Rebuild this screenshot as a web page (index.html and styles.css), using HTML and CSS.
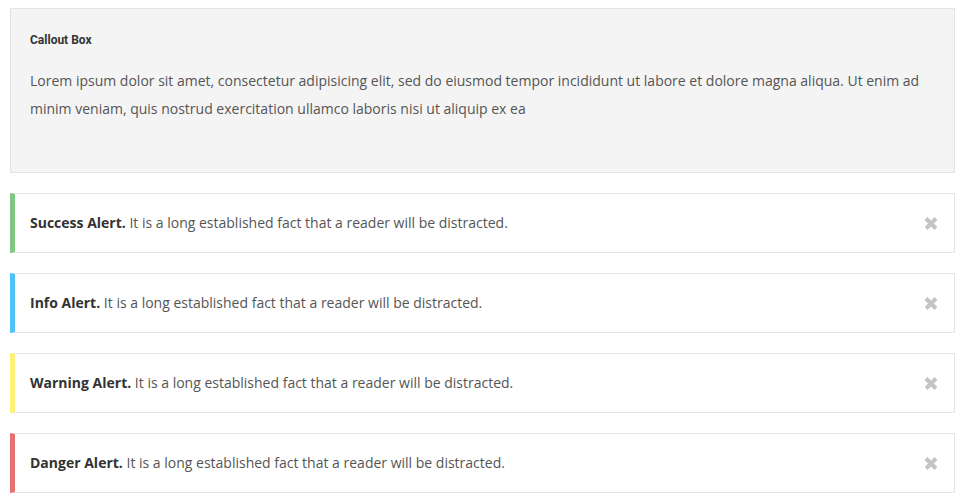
FILE: index.html
```html
<!DOCTYPE html>
<html>
<head>
<meta charset="utf-8">
<link rel="stylesheet" href="styles.css">
</head>
<body>
<div class="page">
  <div class="callout">
    <h4 class="callout-title">Callout Box</h4>
    <p class="callout-text">Lorem ipsum dolor sit amet, consectetur adipisicing elit, sed do eiusmod tempor incididunt ut labore et dolore magna aliqua. Ut enim ad minim veniam, quis nostrud exercitation ullamco laboris nisi ut aliquip ex ea</p>
  </div>
  <div class="alert alert-success"><span class="alert-text"><strong>Success Alert.</strong> It is a long established fact that a reader will be distracted.</span><svg class="close" viewBox="0 0 14 13" width="14" height="13"><path d="M2 1.5 L12 11.5 M12 1.5 L2 11.5"/></svg></div>
  <div class="alert alert-info"><span class="alert-text"><strong>Info Alert.</strong> It is a long established fact that a reader will be distracted.</span><svg class="close" viewBox="0 0 14 13" width="14" height="13"><path d="M2 1.5 L12 11.5 M12 1.5 L2 11.5"/></svg></div>
  <div class="alert alert-warning"><span class="alert-text"><strong>Warning Alert.</strong> It is a long established fact that a reader will be distracted.</span><svg class="close" viewBox="0 0 14 13" width="14" height="13"><path d="M2 1.5 L12 11.5 M12 1.5 L2 11.5"/></svg></div>
  <div class="alert alert-danger"><span class="alert-text"><strong>Danger Alert.</strong> It is a long established fact that a reader will be distracted.</span><svg class="close" viewBox="0 0 14 13" width="14" height="13"><path d="M2 1.5 L12 11.5 M12 1.5 L2 11.5"/></svg></div>
</div>
</body>
</html>
```
FILE: styles.css
```css
html, body { margin: 0; padding: 0; background: #fff; }
body { font-family: "Open Sans", sans-serif; color: #555; }
.page { padding: 8px 11px 0 10px; display: flex; flex-direction: column; gap: 20px; }
.callout { background: #f4f4f4; border: 1px solid #e3e3e3; padding: 20px 19px 20px 19px; }
.callout-title { margin: 0 0 16px; font-family: Roboto, sans-serif; font-weight: 700; font-size: 12px; line-height: 22px; color: #333; }
.callout-text { margin: 0 0 29px; font-size: 14px; line-height: 28px; color: #555; }
.alert { display: flex; align-items: center; justify-content: space-between; height: 58px; box-sizing: content-box; border: 1px solid #e5e5e5; border-left: 5px solid; padding: 0 16px 0 15px; font-size: 14px; color: #555; }
.alert-text { position: relative; top: -1px; }
.alert strong { color: #333; font-weight: 700; }
.alert-success { border-left-color: #81c784; }
.alert-info { border-left-color: #4fc3f7; }
.alert-warning { border-left-color: #fff176; }
.alert-danger { border-left-color: #e57373; }
.close { flex: none; margin-top: 1px; stroke: #c4c4c4; stroke-width: 4; fill: none; }
```
